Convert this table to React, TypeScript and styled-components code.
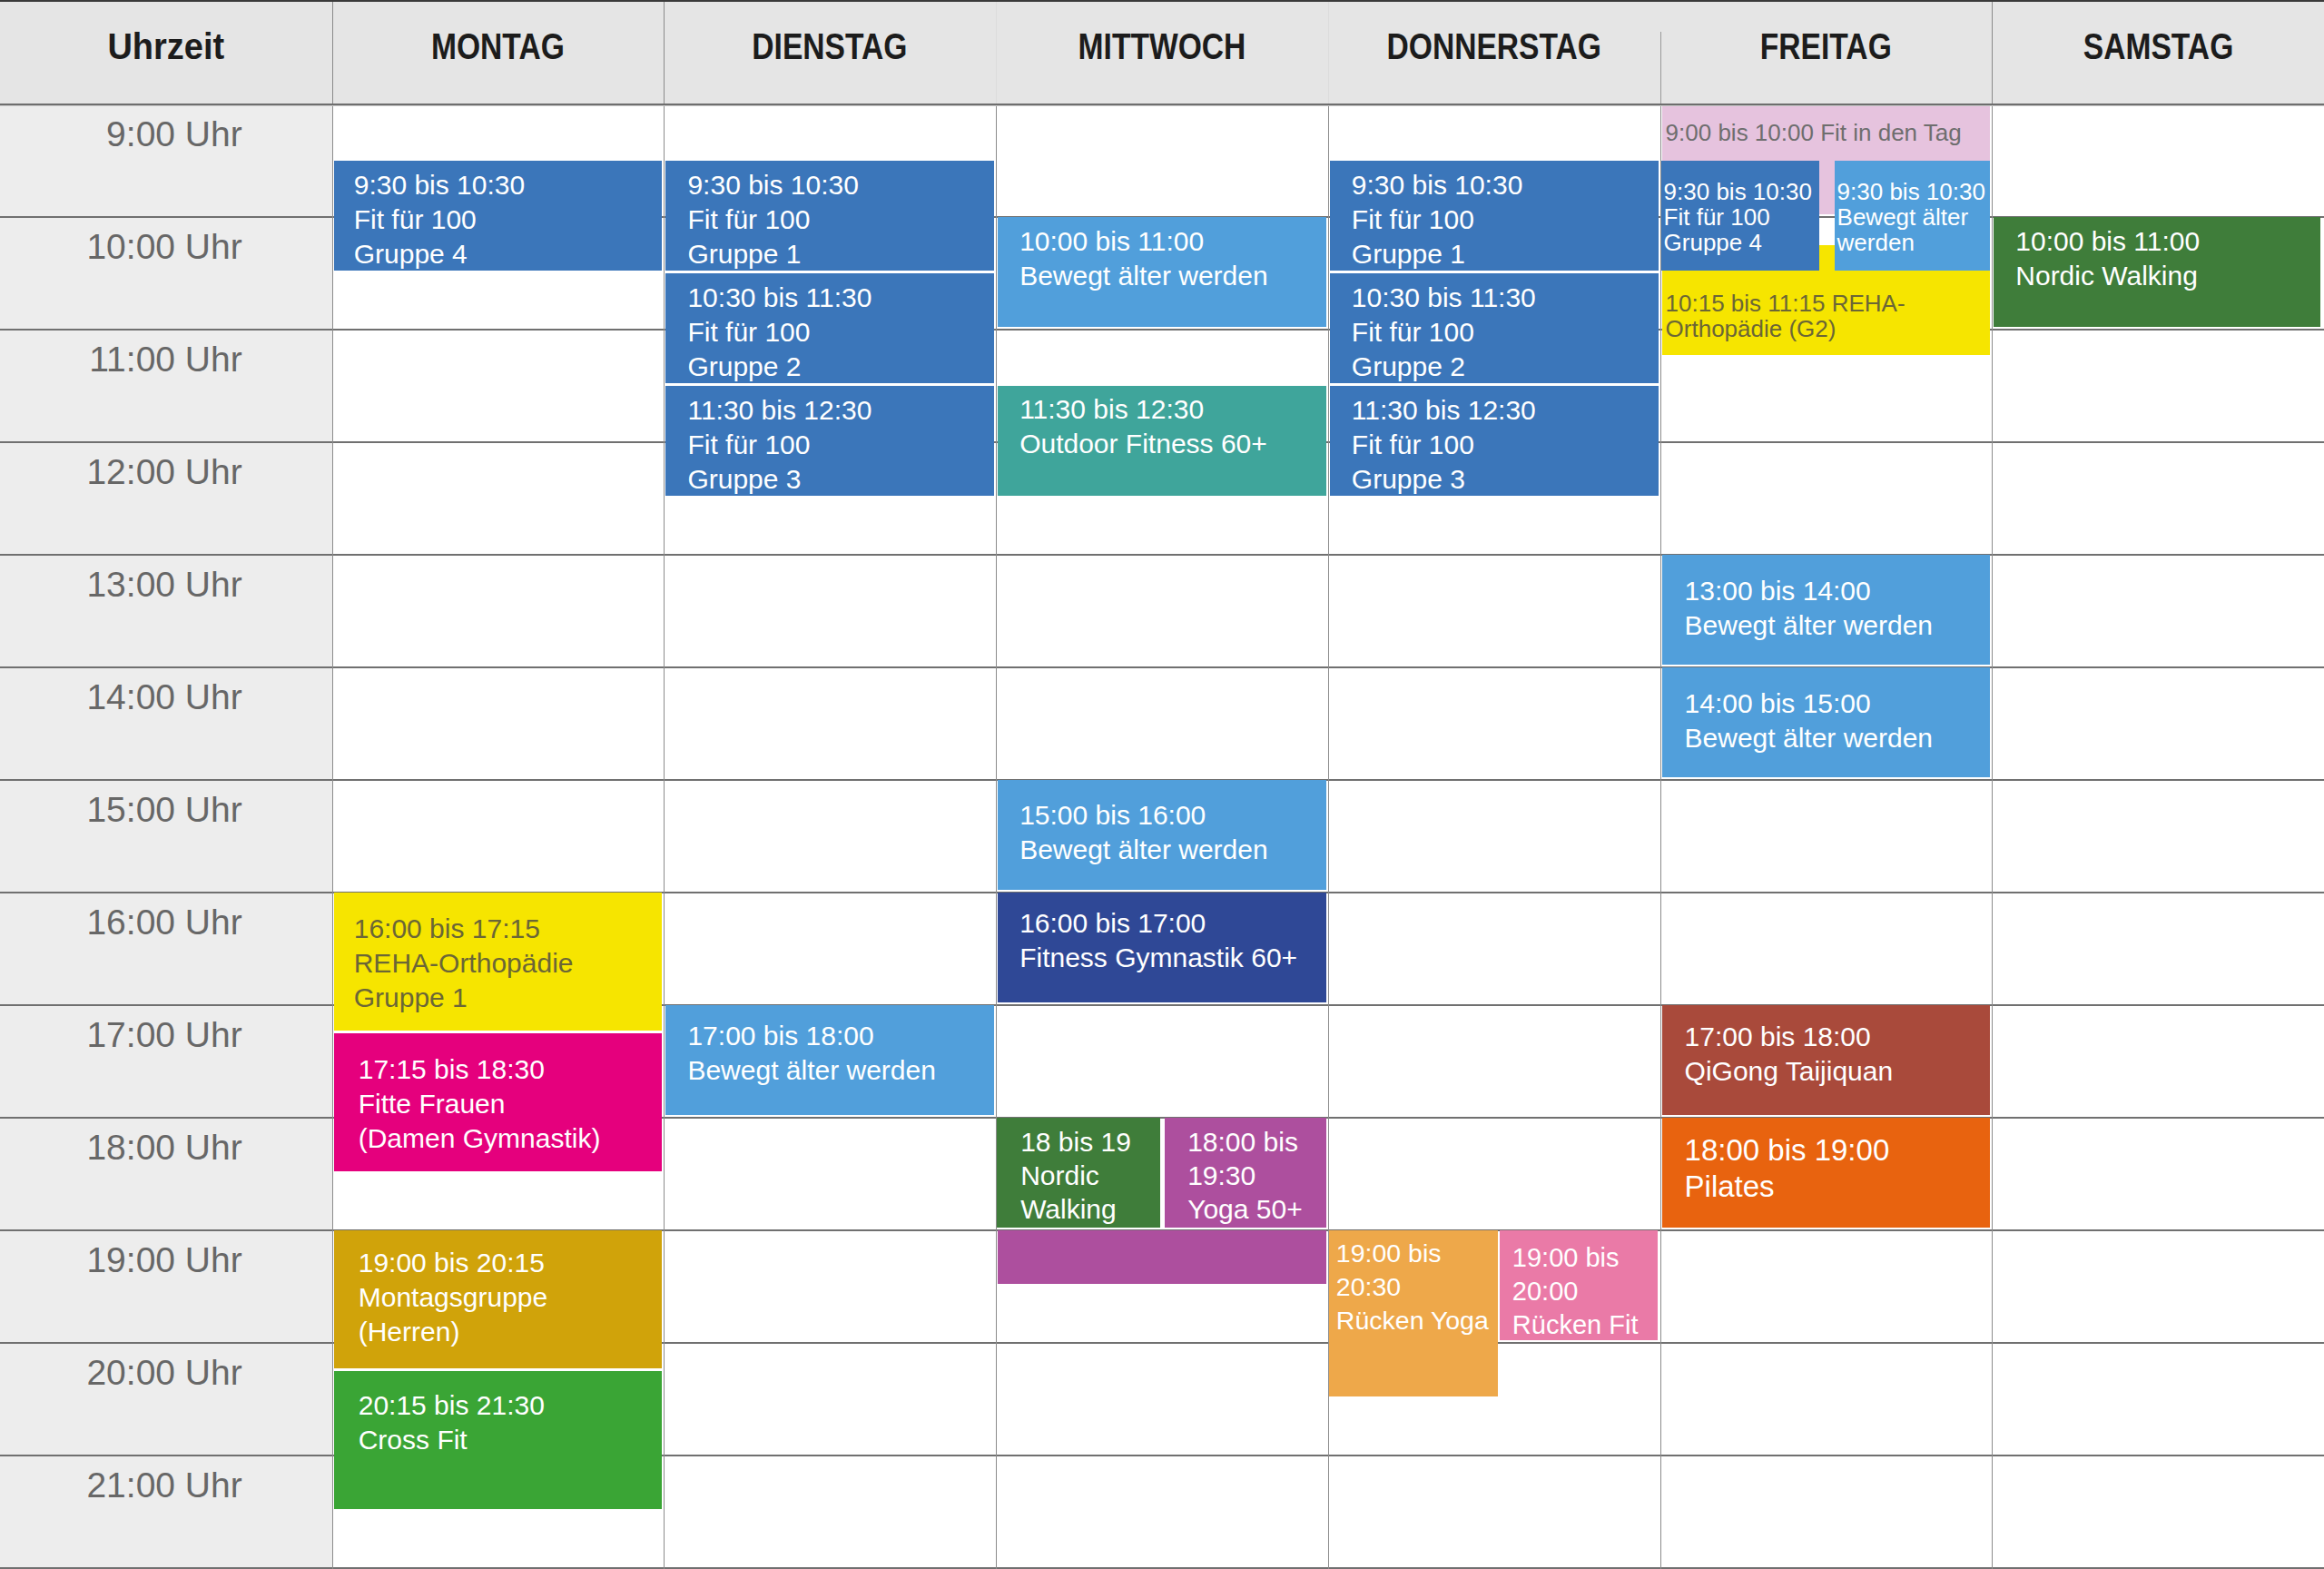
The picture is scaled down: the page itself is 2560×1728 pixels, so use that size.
import React from "react";
import styled, { createGlobalStyle } from "styled-components";

const GlobalStyle = createGlobalStyle`
  html, body { margin: 0; padding: 0; background: #ffffff; }
  body { font-family: "Liberation Sans", Arial, sans-serif; }
  *, *::before, *::after { box-sizing: border-box; }
`;

const ROW = 124;
const FIRST_HOUR = 9;
const HOURS = Array.from({ length: 13 }, (_, i) => FIRST_HOUR + i);

const C = {
  blue: "#3b76ba",
  lblue: "#519fdb",
  teal: "#3fa59b",
  navy: "#2f4896",
  yellow: "#f6e500",
  magenta: "#e5007d",
  mustard: "#d0a30a",
  green: "#3aa535",
  dgreen: "#3f7d3a",
  purple: "#ad4f9e",
  lorange: "#eea84a",
  pink: "#ea7aa7",
  brown: "#a94a3b",
  orange: "#e8630f",
  lpink: "#e6c3de",
  olive: "#6b6636",
  gray: "#6e6e6e",
};

type Divider = "none" | "full" | "faint" | "partial";

type Ev = {
  start: number;
  end: number;
  bg: string;
  color?: string;
  lines: string[];
  pt?: number;
  pl?: number;
  fs?: number;
  lh?: number;
  left?: number;
  width?: number;
  right?: number;
};

type Day = { name: string; divider: Divider; events: Ev[] };

const fit = (start: number, end: number, t: string, g: string): Ev => ({
  start,
  end,
  bg: C.blue,
  lines: [t, "Fit für 100", g],
  pt: 8,
  pl: 24,
});

const DAYS: Day[] = [
  {
    name: "MONTAG",
    divider: "full",
    events: [
      { ...fit(9.5, 10.5, "9:30 bis 10:30", "Gruppe 4"), pl: 22 },
      {
        start: 16,
        end: 17.25,
        bg: C.yellow,
        color: C.olive,
        lines: ["16:00 bis 17:15", "REHA-Orthopädie", "Gruppe 1"],
        pt: 21,
        pl: 22,
      },
      {
        start: 17.25,
        end: 18.5,
        bg: C.magenta,
        lines: ["17:15 bis 18:30", "Fitte Frauen", "(Damen Gymnastik)"],
        pt: 21,
        pl: 27,
      },
      {
        start: 19,
        end: 20.25,
        bg: C.mustard,
        lines: ["19:00 bis 20:15", "Montagsgruppe", "(Herren)"],
        pt: 17,
        pl: 27,
      },
      {
        start: 20.25,
        end: 21.5,
        bg: C.green,
        lines: ["20:15 bis 21:30", "Cross Fit"],
        pt: 19,
        pl: 27,
      },
    ],
  },
  {
    name: "DIENSTAG",
    divider: "full",
    events: [
      fit(9.5, 10.5, "9:30 bis 10:30", "Gruppe 1"),
      fit(10.5, 11.5, "10:30 bis 11:30", "Gruppe 2"),
      fit(11.5, 12.5, "11:30 bis 12:30", "Gruppe 3"),
      {
        start: 17,
        end: 18,
        bg: C.lblue,
        lines: ["17:00 bis 18:00", "Bewegt älter werden"],
        pt: 15,
        pl: 24,
      },
    ],
  },
  {
    name: "MITTWOCH",
    divider: "faint",
    events: [
      {
        start: 10,
        end: 11,
        bg: C.lblue,
        lines: ["10:00 bis 11:00", "Bewegt älter werden"],
        pt: 8,
        pl: 24,
      },
      {
        start: 11.5,
        end: 12.5,
        bg: C.teal,
        lines: ["11:30 bis 12:30", "Outdoor Fitness 60+"],
        pt: 7,
        pl: 24,
      },
      {
        start: 15,
        end: 16,
        bg: C.lblue,
        lines: ["15:00 bis 16:00", "Bewegt älter werden"],
        pt: 20,
        pl: 24,
      },
      {
        start: 16,
        end: 17,
        bg: C.navy,
        lines: ["16:00 bis 17:00", "Fitness Gymnastik 60+"],
        pt: 15,
        pl: 24,
      },
      {
        start: 18,
        end: 19,
        bg: C.dgreen,
        lines: ["18 bis 19", "Nordic", "Walking"],
        pt: 8,
        pl: 26,
        lh: 37,
        left: 0,
        width: 180,
      },
      {
        start: 18,
        end: 19,
        bg: C.purple,
        lines: ["18:00 bis", "19:30", "Yoga 50+"],
        pt: 8,
        pl: 25,
        lh: 37,
        left: 185,
        right: 2,
      },
      {
        start: 19,
        end: 19.5,
        bg: C.purple,
        lines: [],
        left: 1,
        right: 2,
      },
    ],
  },
  {
    name: "DONNERSTAG",
    divider: "faint",
    events: [
      fit(9.5, 10.5, "9:30 bis 10:30", "Gruppe 1"),
      fit(10.5, 11.5, "10:30 bis 11:30", "Gruppe 2"),
      fit(11.5, 12.5, "11:30 bis 12:30", "Gruppe 3"),
      {
        start: 19,
        end: 20.5,
        bg: C.lorange,
        lines: ["19:00 bis", "20:30", "Rücken Yoga"],
        pt: 7,
        pl: 8,
        fs: 28.5,
        lh: 37,
        left: 0,
        width: 186,
      },
      {
        start: 19,
        end: 20,
        bg: C.pink,
        lines: ["19:00 bis", "20:00", "Rücken Fit"],
        pt: 12,
        pl: 14,
        fs: 29,
        lh: 37,
        left: 188,
        right: 3,
      },
    ],
  },
  {
    name: "FREITAG",
    divider: "partial",
    events: [
      {
        start: 9,
        end: 10,
        bg: C.lpink,
        color: C.gray,
        lines: ["9:00 bis 10:00 Fit in den Tag"],
        fs: 26,
        lh: 28,
        pt: 17,
        pl: 4,
      },
      {
        start: 10.25,
        end: 11.25,
        bg: C.yellow,
        color: C.olive,
        lines: ["10:15 bis 11:15 REHA-", "Orthopädie (G2)"],
        fs: 26,
        lh: 28,
        pt: 50,
        pl: 4,
      },
      {
        start: 9.5,
        end: 10.5,
        bg: C.blue,
        lines: ["9:30 bis 10:30", "Fit für 100", "Gruppe 4"],
        fs: 26,
        lh: 28,
        pt: 20,
        pl: 3,
        left: 0,
        width: 174,
      },
      {
        start: 9.5,
        end: 10.5,
        bg: C.lblue,
        lines: ["9:30 bis 10:30", "Bewegt älter", "werden"],
        fs: 26,
        lh: 28,
        pt: 20,
        pl: 3,
        left: 191,
        right: 2,
      },
      {
        start: 13,
        end: 14,
        bg: C.lblue,
        lines: ["13:00 bis 14:00", "Bewegt älter werden"],
        pt: 21,
        pl: 25,
      },
      {
        start: 14,
        end: 15,
        bg: C.lblue,
        lines: ["14:00 bis 15:00", "Bewegt älter werden"],
        pt: 21,
        pl: 25,
      },
      {
        start: 17,
        end: 18,
        bg: C.brown,
        lines: ["17:00 bis 18:00", "QiGong Taijiquan"],
        pt: 16,
        pl: 25,
      },
      {
        start: 18,
        end: 19,
        bg: C.orange,
        lines: ["18:00 bis 19:00", "Pilates"],
        fs: 33,
        lh: 40,
        pt: 16,
        pl: 25,
      },
    ],
  },
  {
    name: "SAMSTAG",
    divider: "full",
    events: [
      {
        start: 10,
        end: 11,
        bg: C.dgreen,
        lines: ["10:00 bis 11:00", "Nordic Walking"],
        pt: 8,
        pl: 24,
        right: 4,
      },
    ],
  },
];

const Page = styled.div`
  width: 2560px;
  height: 1728px;
  display: flex;
  flex-direction: column;
  background: #ffffff;
  overflow: hidden;
  font-family: "Liberation Sans", Arial, sans-serif;
`;

const HeaderRow = styled.div`
  display: grid;
  grid-template-columns: repeat(7, 1fr);
  height: 116px;
  flex: none;
  background: #e5e5e5;
  border-top: 2px solid #3a3a3a;
  border-bottom: 2px solid #6e6e6e;
  box-shadow: 0 1px 0 #c9c9c9;
  position: relative;
  z-index: 2;
`;

const dividerBg = (d: Divider) => {
  switch (d) {
    case "full":
      return "linear-gradient(#8a8a8a, #8a8a8a) no-repeat left top / 1px 100%";
    case "faint":
      return "linear-gradient(#dcdcdc, #dcdcdc) no-repeat left top / 1px 100%";
    case "partial":
      return "linear-gradient(#9a9a9a, #9a9a9a) no-repeat left 33px / 1px calc(100% - 33px)";
    default:
      return "none";
  }
};

const HeaderCell = styled.div<{ $divider: Divider }>`
  display: flex;
  justify-content: center;
  align-items: flex-start;
  padding-top: 29px;
  background: ${(p) => dividerBg(p.$divider)}, #e5e5e5;
`;

const HeaderLabel = styled.span<{ $squeeze?: number }>`
  display: inline-block;
  font-family: "Liberation Sans", Arial, sans-serif;
  font-weight: 700;
  font-size: 40px;
  line-height: 40px;
  color: #1c1c1c;
  white-space: nowrap;
  transform: scaleX(${(p) => p.$squeeze ?? 0.84});
  transform-origin: center;
`;

const Body = styled.div`
  flex: 1;
  display: grid;
  grid-template-columns: repeat(7, 1fr);
`;

const TimeColumn = styled.div`
  display: flex;
  flex-direction: column;
  background: #ededed;
`;

const TimeSlot = styled.div`
  height: ${ROW}px;
  flex: none;
  border-bottom: 2px solid #707070;
  padding: 10px 99px 0 0;
  text-align: right;
  font-size: 39px;
  color: #676767;
  white-space: nowrap;
`;

const DayColumn = styled.div`
  position: relative;
  display: flex;
  flex-direction: column;
  border-left: 1px solid #8c8c8c;
  background: #ffffff;
`;

const Slot = styled.div`
  height: ${ROW}px;
  flex: none;
  border-bottom: 2px solid #707070;
`;

const EventBox = styled.div<{
  $bg: string;
  $color: string;
  $pt: number;
  $pl: number;
  $fs: number;
  $lh: number;
}>`
  position: absolute;
  background: ${(p) => p.$bg};
  color: ${(p) => p.$color};
  padding: ${(p) => p.$pt}px 0 0 ${(p) => p.$pl}px;
  font-size: ${(p) => p.$fs}px;
  line-height: ${(p) => p.$lh}px;
  display: flex;
  flex-direction: column;
  overflow: visible;
`;

const EventLine = styled.span`
  display: block;
  white-space: nowrap;
`;

const EventCard: React.FC<{ ev: Ev }> = ({ ev }) => {
  const top = (ev.start - FIRST_HOUR) * ROW - 1;
  const height = (ev.end - ev.start) * ROW - 3;
  const pos: React.CSSProperties = { top, height };
  pos.left = ev.left ?? 1;
  if (ev.width !== undefined) pos.width = ev.width;
  else pos.right = ev.right ?? 2;
  return (
    <EventBox
      $bg={ev.bg}
      $color={ev.color ?? "#ffffff"}
      $pt={ev.pt ?? 8}
      $pl={ev.pl ?? 24}
      $fs={ev.fs ?? 30}
      $lh={ev.lh ?? 38}
      style={pos}
    >
      {ev.lines.map((l, i) => (
        <EventLine key={i}>{l}</EventLine>
      ))}
    </EventBox>
  );
};

export default function App() {
  return (
    <>
      <GlobalStyle />
      <Page>
        <HeaderRow>
          <HeaderCell $divider="none">
            <HeaderLabel $squeeze={0.95}>Uhrzeit</HeaderLabel>
          </HeaderCell>
          {DAYS.map((d) => (
            <HeaderCell key={d.name} $divider={d.divider}>
              <HeaderLabel>{d.name}</HeaderLabel>
            </HeaderCell>
          ))}
        </HeaderRow>
        <Body>
          <TimeColumn>
            {HOURS.map((h) => (
              <TimeSlot key={h}>{h}:00 Uhr</TimeSlot>
            ))}
          </TimeColumn>
          {DAYS.map((d) => (
            <DayColumn key={d.name}>
              {HOURS.map((h) => (
                <Slot key={h} />
              ))}
              {d.events.map((ev, i) => (
                <EventCard key={i} ev={ev} />
              ))}
            </DayColumn>
          ))}
        </Body>
      </Page>
    </>
  );
}
